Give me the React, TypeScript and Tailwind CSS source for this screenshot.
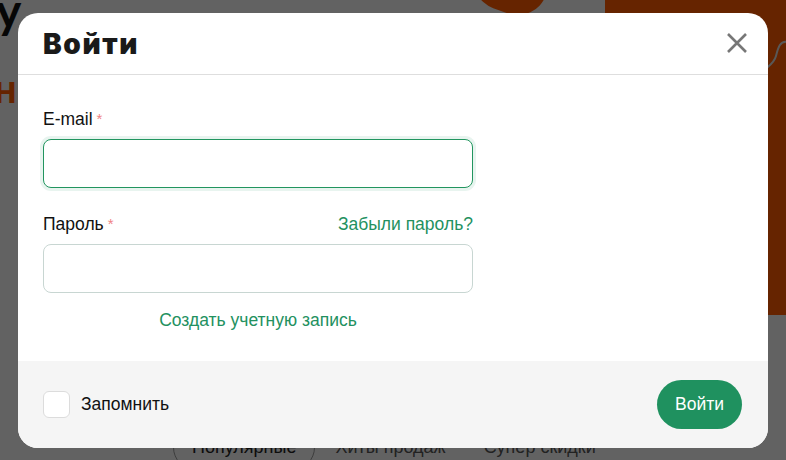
import React from "react";

export default function App() {
  return (
    <div className="relative w-[786px] h-[460px] overflow-hidden bg-[#f4f4f4]" style={{ fontFamily: '"Liberation Sans", Arial, sans-serif' }}>
      {/* background page */}
      <div className="absolute inset-0">
        <div className="absolute left-[605px] top-[-20px] w-[240px] h-[335px] rounded-bl-[60px] rounded-br-[40px] bg-[#ff5a00]" />
        <div className="absolute left-[470px] top-[-30px] w-[75px] h-[42px] rounded-b-[30px] bg-[#ff5a00] rotate-[20deg]" />
        <svg className="absolute left-[760px] top-[40px]" width="30" height="40" viewBox="0 0 30 40" fill="none" stroke="#ddd" strokeWidth="2">
          <path d="M28 2C20 0 18 8 16 16C14 24 8 26 2 32" />
        </svg>
        <div className="absolute left-[-4px] top-[-26px] text-[48px] font-bold text-[#111]" style={{ fontFamily: 'Lato, sans-serif' }}>у</div>
        <div className="absolute left-[-6px] top-[58px] text-[40px] font-bold text-[#ff5a00]" style={{ fontFamily: 'Lato, sans-serif' }}>н</div>
        <div className="absolute left-[173px] top-[425px] flex items-center gap-[10px] text-[18px] text-[#222]">
          <span className="rounded-full border border-[#999] px-[18px] py-[8px]">Популярные</span>
          <span className="px-[10px] py-[8px] text-[#555]">Хиты продаж</span>
          <span className="px-[18px] py-[8px] text-[#555]">Супер скидки</span>
        </div>
      </div>
      {/* overlay */}
      <div className="absolute inset-0 bg-[rgba(0,0,0,0.6)] flex items-center justify-center">
        <div className="w-[750px] h-[435px] bg-white rounded-[20px] overflow-hidden flex flex-col">
          <div className="h-[62px] shrink-0 flex items-center justify-between pl-[25px] pr-[17px] border-b border-[#dedede]">
            <h1 className="text-[28px] font-black text-[#1a1a1a] tracking-[1.6px] mt-[2px]" style={{ fontFamily: 'Inter, sans-serif' }}>Войти</h1>
            <button className="w-[28px] h-[28px] flex items-center justify-center mt-[-1px]">
              <svg width="22" height="22" viewBox="0 0 22 22" fill="none" stroke="#777" strokeWidth="2.6" strokeLinecap="butt">
                <path d="M2 2L20 20M20 2L2 20" />
              </svg>
            </button>
          </div>
          <div className="flex-1 pl-[25px] pt-[34px]">
            <div className="w-[430px]">
              <label className="block text-[17.5px] leading-[20px] text-[#111] mb-[10px]">
                E-mail<span className="text-[#f08383] ml-[4px] text-[15px] align-top">*</span>
              </label>
              <div className="h-[49px] rounded-[8px] border border-[#22955f] ring-[3px] ring-[#22955f]/10 bg-white" />
              <div className="flex items-end justify-between mt-[26px] mb-[10px]">
                <label className="block text-[17.5px] leading-[20px] text-[#111]">
                  Пароль<span className="text-[#f08383] ml-[4px] text-[15px] align-top">*</span>
                </label>
                <a className="text-[17.5px] leading-[20px] text-[#23915f]">Забыли пароль?</a>
              </div>
              <div className="h-[49px] rounded-[8px] border border-[#c8d6d2] bg-white" />
              <div className="text-center mt-[17px] text-[17.5px] leading-[20px] text-[#23915f]">Создать учетную запись</div>
            </div>
          </div>
          <div className="h-[87px] shrink-0 bg-[#f5f5f5] flex items-center justify-between pl-[25px] pr-[26px]">
            <label className="flex items-center gap-[11px]">
              <span className="w-[27px] h-[27px] rounded-[6px] border border-[#dcdcdc] bg-white" />
              <span className="text-[17.5px] text-[#111]">Запомнить</span>
            </label>
            <button className="w-[85px] h-[49px] rounded-full bg-[#1f915f] text-white text-[17.5px]">Войти</button>
          </div>
        </div>
      </div>
    </div>
  );
}
